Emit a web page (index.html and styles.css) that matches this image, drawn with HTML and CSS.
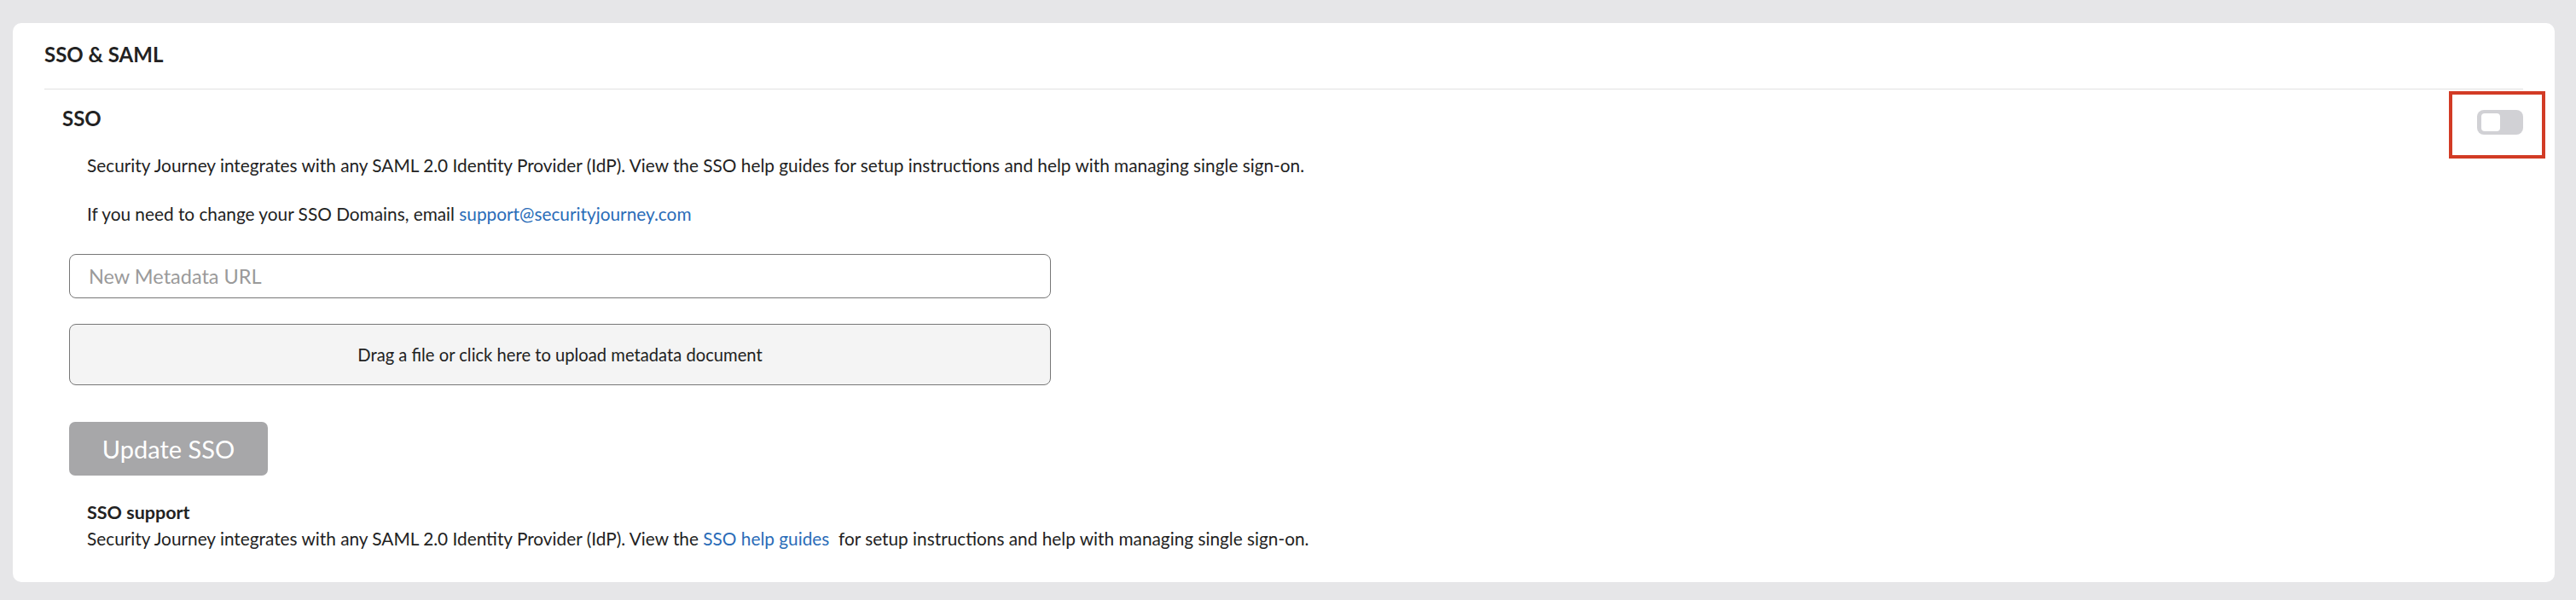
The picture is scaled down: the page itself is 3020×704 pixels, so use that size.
FILE: index.html
```html
<!doctype html>
<html lang="en">
<head>
    <meta charset="UTF-8">
    <title>SSO &amp; SAML</title>
    <link rel="stylesheet" href="styles.css">
</head>
<body>
    <div class="card">
        <div class="cardHead">SSO &amp; SAML</div>
        <div class="ssoBox">
            <div class="ssoTop">
                <div class="ssoTitle">SSO</div>
                <div class="switchWrap">
                    <span class="switch"><span class="knob"></span></span>
                    <span class="mark"></span>
                </div>
            </div>
            <p class="txt first">Security Journey integrates with any SAML 2.0 Identity Provider (IdP). View the SSO help guides for setup instructions and help with managing single sign-on.</p>
            <p class="txt second">If you need to change your SSO Domains, email <a href="javascript:void(0)">support@securityjourney.com</a></p>
            <input class="urlInput" type="text" placeholder="New Metadata URL">
            <div class="dropZone">Drag a file or click here to upload metadata document</div>
            <button class="btnUpdate" disabled>Update SSO</button>
            <div class="support">
                <div class="supportTitle">SSO support</div>
                <p class="txt">Security Journey integrates with any SAML 2.0 Identity Provider (IdP). View the <a href="javascript:void(0)">SSO help guides</a>&nbsp; for setup instructions and help with managing single sign-on.</p>
            </div>
        </div>
    </div>
</body>
</html>
```

FILE: styles.css
```css
*{
    padding: 0;
    margin: 0;
    box-sizing: border-box;
}
a{
    text-decoration: none;
    color: #2a6cb8;
}
body{
    background: #e6e6e8;
    padding: 27px 25px 22px 15px;
    font-family: Lato, "Open Sans", sans-serif;
    color: #222;
}
.card{
    background: #fff;
    border-radius: 10px;
    padding: 0 37px 39px;
}
.cardHead{
    height: 78px;
    line-height: 28px;
    padding-top: 23px;
    font-size: 24px;
    font-weight: 700;
    border-bottom: 1px solid #e2e2e2;
}
.ssoBox{
    padding-left: 21px;
}
.ssoTop{
    display: flex;
    justify-content: space-between;
    align-items: flex-start;
    padding-top: 20px;
}
.ssoTitle{
    font-size: 24px;
    font-weight: 700;
    line-height: 28px;
}
.switchWrap{
    position: relative;
    margin-top: 4px;
}
.switch{
    display: block;
    width: 54px;
    height: 29px;
    border-radius: 8px;
    background: #d1d1d5;
    padding: 4px 5px;
}
.knob{
    display: block;
    width: 22px;
    height: 21px;
    border-radius: 4px;
    background: #fff;
}
/* red highlight frame */
.mark{
    position: absolute;
    left: -33px;
    top: -22px;
    width: 113px;
    height: 79px;
    border: 4px solid #d23b25;
}
.txt{
    font-size: 20.8px;
    line-height: 26px;
    padding-left: 29px;
}
.first{
    margin-top: 23px;
}
.second{
    margin-top: 31px;
}
.urlInput{
    display: block;
    margin: 34px 0 0 8px;
    width: 1151px;
    height: 52px;
    border: 1px solid #777;
    border-radius: 8px;
    padding: 0 22px;
    font-family: inherit;
    font-size: 23.5px;
    outline: none;
}
.urlInput::placeholder{
    color: #9a9a9a;
}
.dropZone{
    margin: 30px 0 0 8px;
    width: 1151px;
    height: 72px;
    border: 1px solid #777;
    border-radius: 8px;
    background: #f4f4f4;
    display: flex;
    align-items: center;
    justify-content: center;
    font-size: 20.2px;
}
.btnUpdate{
    display: block;
    margin: 43px 0 0 8px;
    width: 233px;
    height: 63px;
    border: none;
    border-radius: 7px;
    background: #a7a7a9;
    color: #fff;
    font-family: inherit;
    font-size: 29px;
}
.support{
    margin-top: 31px;
}
.supportTitle{
    font-size: 21.5px;
    font-weight: 700;
    line-height: 24px;
    padding-left: 29px;
    margin-bottom: 7px;
}
.support .txt{
    line-height: 24px;
}
```
